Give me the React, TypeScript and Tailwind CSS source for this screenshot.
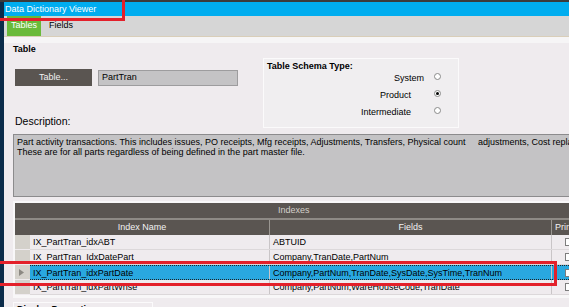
import React from "react";

const rows = [
  { name: "IX_PartTran_idxABT", fields: "ABTUID", selected: false },
  { name: "IX_PartTran_IdxDatePart", fields: "Company,TranDate,PartNum", selected: false },
  {
    name: "IX_PartTran_idxPartDate",
    fields: "Company,PartNum,TranDate,SysDate,SysTime,TranNum",
    selected: true,
  },
  { name: "IX_PartTran_idxPartWhse", fields: "Company,PartNum,WareHouseCode,TranDate", selected: false },
];

const Radio: React.FC<{ label: string; checked?: boolean; gap: string }> = ({ label, checked, gap }) => (
  <div className="flex items-center justify-end h-[17px] shrink-0 pr-[17px]">
    <span className={`leading-[11px] ${gap}`}>{label}</span>
    <span className="w-[7px] h-[7px] -mt-[4px] rounded-full bg-white border border-[#8a8a8a] flex items-center justify-center">
      {checked && <span className="w-[3px] h-[3px] rounded-full bg-black" />}
    </span>
  </div>
);

export default function App() {
  return (
    <div className="relative w-[569px] h-[307px] overflow-hidden bg-[#efebee] text-[9px] text-black font-['Liberation_Sans',Arial,sans-serif]">
      <div className="h-[2px] bg-[#3b3b3b]" />
      <div className="flex h-[305px]">
        <div className="w-[4px] shrink-0 bg-[#0b2c4a]" />
        <div className="flex-1 flex flex-col min-w-0 overflow-hidden">
          {/* title bar */}
          <div className="h-[14px] shrink-0 bg-[#00adef] text-white leading-[14px] pl-[1px]">Data Dictionary Viewer</div>

          {/* tabs */}
          <div className="h-[21px] shrink-0 bg-[#d6d6d6] flex items-end border-b border-[#d9ceb9]">
            <div className="ml-[3px] w-[34px] h-[20px] bg-[#6aba3a] text-white flex items-center justify-center">Tables</div>
            <div className="ml-[8px] h-[20px] flex items-center">Fields</div>
          </div>

          <div className="h-[6px] shrink-0 bg-[#f6f5f6]" />

          <div className="pl-[9px] pt-[1px] flex flex-col">
            <div className="h-[11px] shrink-0 leading-[11px] font-bold">Table</div>

            <div className="flex shrink-0 mt-[3px]">
              <div className="w-[250px] shrink-0 flex flex-col">
                <div className="flex mt-[11px]">
                  <div className="ml-[2px] w-[77px] h-[17px] bg-[#5a5551] text-[#f2f2f2] flex items-center justify-center">
                    Table...
                  </div>
                  <div className="ml-[6px] mt-[1px] w-[140px] h-[16px] bg-[#c4c3c5] border border-[#9d9c9e] pl-[3px] flex items-center">
                    PartTran
                  </div>
                </div>
                <div className="mt-[29px] ml-[2px] text-[10.5px] leading-[13px]">Description:</div>
              </div>

              <div className="w-[196px] h-[70px] border border-[#fbfafb] bg-[#f0eef0] flex flex-col">
                <div className="pl-[3px] pt-[2px] h-[11px] shrink-0 leading-[11px] font-bold">Table Schema Type:</div>
                <Radio label="System" gap="mr-[10px]" />
                <Radio label="Product" checked gap="mr-[23px]" />
                <Radio label="Intermediate" gap="mr-[23px]" />
              </div>
            </div>

            {/* description */}
            <div className="mt-[6px] w-[570px] h-[63px] shrink-0 bg-[#c4c3c5] border border-[#8c8b8d] pl-[3px] pt-[2px] leading-[10px] whitespace-pre">
              {"Part activity transactions. This includes issues, PO receipts, Mfg receipts, Adjustments, Transfers, Physical count     adjustments, Cost replacements\nThese are for all parts regardless of being defined in the part master file."}
            </div>

            {/* grid */}
            <div className="mt-[4px] w-[570px] shrink-0 bg-[#f8f7f8] pt-[2px] pl-[2px] pb-[3px]">
              <div className="h-[15px] bg-[#5a5551] text-[#d3cfca] leading-[15px] pl-[263px]">Indexes</div>
              <div className="h-[2px] bg-[#8e8a85]" />
              <div className="flex h-[15px] bg-[#5a5551] text-[#f2f2f2] leading-[15px]">
                <div className="w-[255px] text-center border-r border-[#9a9691]">Index Name</div>
                <div className="w-[282px] text-center border-r border-[#9a9691]">Fields</div>
                <div className="pl-[3px]">Prim</div>
              </div>
              {rows.map((r) => (
                <div key={r.name} className="flex h-[15px] leading-[14px]">
                  <div className="w-[15px] bg-[#d4d1cb] border-b border-[#efebee] flex items-center justify-center">
                    {r.selected && (
                      <svg width="5" height="7" viewBox="0 0 5 7" className="ml-[-2px]">
                        <path d="M0 0 L5 3.5 L0 7 Z" fill="#8c8983" />
                      </svg>
                    )}
                  </div>
                  <div
                    className={`flex flex-1 ${
                      r.selected
                        ? "bg-[#29a8e0] border-y border-dotted border-[#222]"
                        : "bg-[#efebee] border-b border-[#dcd8da]"
                    }`}
                  >
                    <div className="w-[240px] pl-[3px] border-r border-[#c9c5c7]">{r.name}</div>
                    <div className="w-[282px] pl-[3px] border-r border-[#c9c5c7]">{r.fields}</div>
                    <div className="flex-1 flex items-center pl-[13px]">
                      <span className="w-[8px] h-[8px] bg-white border border-[#7d7d7d]" />
                    </div>
                  </div>
                </div>
              ))}
            </div>

            <div className="mt-[4px] w-[140px] h-[12px] shrink-0 border border-[#fbfafb] pl-[3px] pt-[1px] font-bold leading-[11px]">
              Display Properties
            </div>
          </div>
        </div>
      </div>

      {/* red annotation boxes */}
      <div className="absolute left-[-3px] top-[-3px] w-[128px] h-[24px] border-[3px] border-[#e3202a]" />
      <div className="absolute left-[-3px] top-[261px] w-[560px] h-[25px] border-[3px] border-[#e3202a]" />
    </div>
  );
}
